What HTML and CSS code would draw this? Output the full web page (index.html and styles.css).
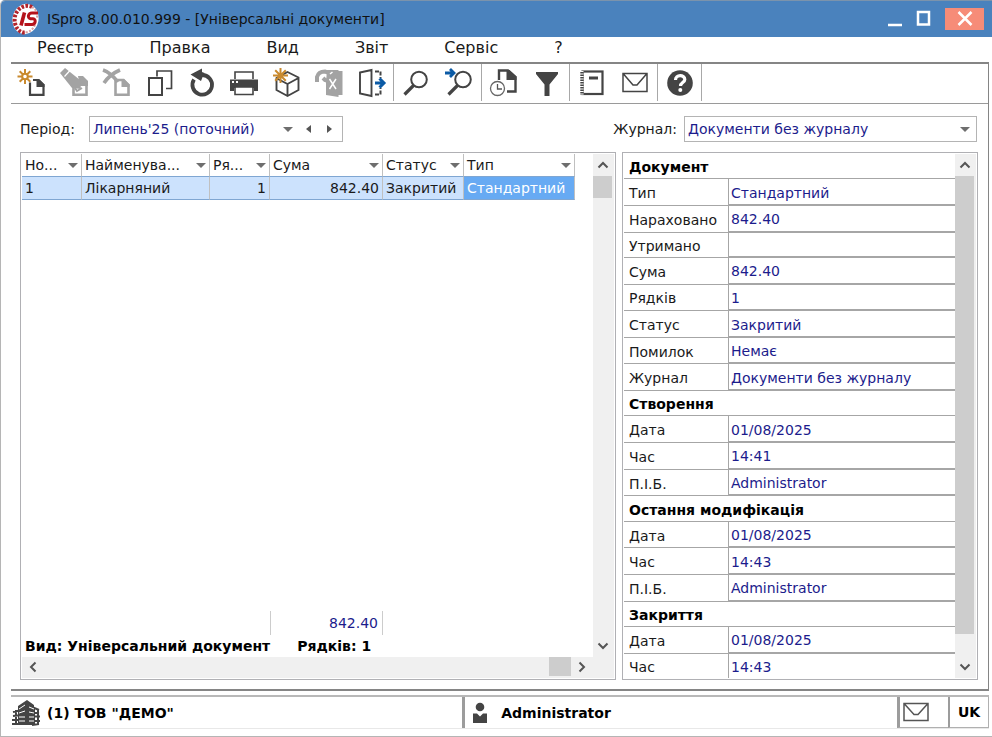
FILE: index.html
```html
<!DOCTYPE html>
<html lang="uk">
<head>
    <meta charset="UTF-8">
    <meta name="viewport" content="width=device-width, initial-scale=1.0">
    <title>ISpro 8.00.010.999 - [Універсальні документи]</title>
    <link rel="stylesheet" href="styles.css">
</head>
<body>

<div class="window">
    <header class="titlebar">
        <svg class="logo" viewBox="0 0 28 32" aria-hidden="true">
            <ellipse cx="13.5" cy="16" rx="11" ry="13.2" fill="#fff" stroke="#fff" stroke-width="4" transform="rotate(12 13.5 16)"/>
            <path d="M20 4C12 0 3 7 2.600 16c-.2 8 5 14.500 11 13.500" fill="none" stroke="#b3242b" stroke-width="4" stroke-dasharray="2.600 1.500"/>
            <path d="M20 4c4 2 5.500 6 5 11M13.600 29.500c5-1 8-4 9.500-8" fill="none" stroke="#dba0a3" stroke-width="2" stroke-dasharray="2 1.500"/>
            <path d="M9 22.500l3.500-13" stroke="#b5121b" stroke-width="3.600" fill="none"/>
            <path d="M26 10h-6c-4 0-5 5.200-1.500 5.700h2.500c3.500.3 2.600 5.700-1 5.700h-7.500" stroke="#b5121b" stroke-width="3" fill="none"/>
        </svg>
        <h1>ISpro 8.00.010.999 - [Універсальні документи]</h1>
        <div class="window-buttons">
            <button type="button" aria-label="Згорнути"><svg width="16" height="18"><path d="M1 15h14" stroke="#fff" stroke-width="2.500"/></svg></button>
            <button type="button" aria-label="Розгорнути"><svg width="16" height="18"><rect x="2" y="2" width="11" height="12.500" fill="none" stroke="#fff" stroke-width="2.500"/></svg></button>
            <button type="button" class="close" aria-label="Закрити"><svg width="16" height="18"><path d="M1.500 2l13 13M14.500 2l-13 13" stroke="#fff" stroke-width="2.500"/></svg></button>
        </div>
    </header>

    <nav class="menu">
        <a href="#">Реєстр</a>
        <a href="#">Правка</a>
        <a href="#">Вид</a>
        <a href="#">Звіт</a>
        <a href="#">Сервіс</a>
        <a href="#">?</a>
    </nav>

    <main class="frame">
        <div class="toolbar">
            <div class="group group-main">
                <button type="button" aria-label="Створити">
                    <svg viewBox="0 0 30 30"><path d="M13 14.500v12.300h13.500V17l-5-5H16" fill="none" stroke="#444" stroke-width="2.200"/><path d="M19.500 11h2.500l5.500 5.500v2.500h-8z" fill="#444"/><path d="M8 1v15M.5 8.500h15M2.700 3.200l10.600 10.600M13.300 3.200L2.700 13.800" stroke="#c98a2e" stroke-width="2"/><circle cx="8" cy="8.500" r="2.800" fill="#fff" stroke="#c98a2e" stroke-width="2"/></svg>
                </button>
                <button type="button" aria-label="Змінити">
                    <svg viewBox="0 0 30 30"><path d="M13.500 18v8.800h13V14l-4.500-3.500h-2" fill="none" stroke="#a3a3a3" stroke-width="2.600"/><path d="M18 8h5l5 5v5h-8z" fill="#a3a3a3"/><path d="M0 5l5-5 15 12 1 9-9-1z" fill="#a3a3a3"/><path d="M4.500 8.500l5.500-6" stroke="#fff" stroke-width="1.200"/><path d="M15 20l2 3 5-3" fill="none" stroke="#a3a3a3" stroke-width="2"/></svg>
                </button>
                <button type="button" aria-label="Видалити">
                    <svg viewBox="0 0 30 30"><path d="M13.500 12v14.800h13V17l-5-5h-8" fill="none" stroke="#a3a3a3" stroke-width="2.600"/><path d="M19.500 11h2.500l5.500 5.500v2.500h-8z" fill="#a3a3a3"/><path d="M1 2c6 2 11 7 15 12M18 2C11 5 6 9 2 15" fill="none" stroke="#a3a3a3" stroke-width="3.600"/></svg>
                </button>
                <button type="button" aria-label="Копіювати">
                    <svg viewBox="0 0 30 30"><path d="M12 8.500V3h14.500v17.500H21" fill="none" stroke="#444" stroke-width="1.700"/><rect x="4" y="10" width="13" height="17" fill="none" stroke="#444" stroke-width="2"/></svg>
                </button>
                <button type="button" aria-label="Оновити">
                    <svg viewBox="0 0 30 30"><path d="M7 11.500a9.800 9.800 0 1 0 8-4.500" fill="none" stroke="#444" stroke-width="3.800"/><path d="M3.500 6.500l11.500-6V4l2.500 1L16 8l-2 5z" fill="#444"/></svg>
                </button>
                <button type="button" aria-label="Друк">
                    <svg viewBox="0 0 30 30"><path d="M6 11V4h18v7" fill="none" stroke="#444" stroke-width="1.600"/><path d="M1 11.500h28v11.500h-4V20H5v3H1z" fill="#444"/><path d="M6 19v7.500h18V19z" fill="#fff" stroke="#444" stroke-width="1.600"/><path d="M3 14h2M7 14h2" stroke="#fff" stroke-width="2"/></svg>
                </button>
                <button type="button" aria-label="Новий пакет">
                    <svg viewBox="0 0 30 30"><path d="M15.500 4l11 5.500v12.500l-11 6-11-6V10zM5 10.500l10.500 5.500 11-6M15.500 16v12" fill="none" stroke="#444" stroke-width="1.900"/><path d="M8.500 0v15M1 7.500h15M3.200 2.200l10.600 10.600M13.800 2.200L3.200 12.800" stroke="#c98a2e" stroke-width="2"/></svg>
                </button>
                <button type="button" aria-label="Експорт">
                    <svg viewBox="0 0 30 30"><path d="M13 2h11.500v1h4v24h-4v2L12 27V14z" fill="#a3a3a3"/><path d="M3 14V9c1-4 4-5.500 8-5.500l6 2V14l-6-2-2-2" fill="none" stroke="#a3a3a3" stroke-width="4"/><path d="M15.500 11l6.500 10M22 11l-6.500 10M16 6l2.500-2" stroke="#fff" stroke-width="1.500"/></svg>
                </button>
                <button type="button" aria-label="Вихід">
                    <svg viewBox="0 0 30 30"><path d="M3 4.500L14.500 2v26L3 25.500z" fill="none" stroke="#444" stroke-width="1.900"/><path d="M18 3.500h5.500V10M18 26.500h5.500V20" fill="none" stroke="#444" stroke-width="2" stroke-dasharray="4 1.500"/><path d="M18 15h8M22.500 10.500L27 15l-4.500 4.500" fill="none" stroke="#0b5aa5" stroke-width="3"/></svg>
                </button>
            </div>
            <div class="group">
                <button type="button" aria-label="Пошук">
                    <svg viewBox="0 0 30 30"><circle cx="18" cy="11.500" r="7.800" fill="none" stroke="#444" stroke-width="2"/><path d="M13 17L3.500 26.500" stroke="#444" stroke-width="3.200"/></svg>
                </button>
                <button type="button" aria-label="Шукати далі">
                    <svg viewBox="0 0 30 30"><circle cx="19" cy="11.500" r="7.800" fill="none" stroke="#444" stroke-width="2"/><path d="M14 17L4.500 26.500" stroke="#444" stroke-width="3.200"/><path d="M1 5h8M6 1l4 4-4 4" fill="none" stroke="#0b5aa5" stroke-width="2.800"/></svg>
                </button>
            </div>
            <div class="group">
                <button type="button" aria-label="Історія">
                    <svg viewBox="0 0 30 30"><path d="M10 12V2.500h9L26.500 9v14.500H18" fill="none" stroke="#444" stroke-width="2.400"/><path d="M17.500 2h3l7 6.500V12h-10z" fill="#444"/><circle cx="8.500" cy="20.500" r="7" fill="#fff" stroke="#666" stroke-width="1.300"/><path d="M8.500 16v5h4.500" fill="none" stroke="#555" stroke-width="1.300"/></svg>
                </button>
                <button type="button" aria-label="Фільтр">
                    <svg viewBox="0 0 30 30"><path d="M4 4h22v2l-8.500 10.500V28h-5V16.500L4 6z" fill="#444"/></svg>
                </button>
            </div>
            <div class="group">
                <button type="button" aria-label="Журнал">
                    <svg viewBox="0 0 30 30"><rect x="5.500" y="3.500" width="20" height="22.500" fill="none" stroke="#444" stroke-width="2.200"/><path d="M5 3v24" stroke="#fff" stroke-width="3"/><path d="M5 4v23" stroke="#444" stroke-width="3.400" stroke-dasharray="1.500 1"/><path d="M12 10h9" stroke="#444" stroke-width="3"/></svg>
                </button>
                <button type="button" aria-label="Пошта">
                    <svg viewBox="0 0 30 30"><path d="M3 5.500h24v18H3zM3.500 6L13 17h4l9.500-11" fill="none" stroke="#444" stroke-width="1.500"/></svg>
                </button>
            </div>
            <div class="group group-help">
                <button type="button" aria-label="Довідка">
                    <svg viewBox="0 0 30 30"><circle cx="15" cy="15" r="12.800" fill="#444"/><path d="M10.500 12c0-5.800 9.300-5.500 9.300-.6 0 3.200-4.300 3.200-4.300 6.600" fill="none" stroke="#fff" stroke-width="3.200"/><circle cx="15.300" cy="22" r="2" fill="#fff"/></svg>
                </button>
            </div>
        </div>

        <div class="filters">
            <label for="period">Період:</label>
            <div class="combo combo-period">
                <select id="period"><option>Липень'25 (поточний)</option></select>
                <span class="arrow"></span>
                <button type="button" aria-label="Попередній період"><span class="arrow-left"></span></button>
                <button type="button" aria-label="Наступний період"><span class="arrow-right"></span></button>
            </div>
            <label for="journal" class="journal-label">Журнал:</label>
            <div class="combo combo-journal">
                <select id="journal"><option>Документи без журналу</option></select>
                <span class="arrow"></span>
            </div>
        </div>

        <div class="panels">
            <section class="panel registry">
                <div class="registry-body">
                    <table class="grid">
                        <colgroup>
                            <col class="col-number"><col class="col-name"><col class="col-rows"><col class="col-sum"><col class="col-status"><col class="col-type">
                        </colgroup>
                        <thead>
                            <tr>
                                <th><div>Но...<span class="arrow"></span></div></th>
                                <th><div>Найменува...<span class="arrow"></span></div></th>
                                <th><div>Ря...<span class="arrow"></span></div></th>
                                <th><div>Сума<span class="arrow"></span></div></th>
                                <th><div>Статус<span class="arrow"></span></div></th>
                                <th><div>Тип<span class="arrow"></span></div></th>
                            </tr>
                        </thead>
                        <tbody>
                            <tr>
                                <td>1</td>
                                <td>Лікарняний</td>
                                <td class="num">1</td>
                                <td class="num">842.40</td>
                                <td>Закритий</td>
                                <td class="current">Стандартний</td>
                            </tr>
                        </tbody>
                    </table>
                    <div class="registry-footer">
                        <div class="total">842.40</div>
                        <div class="summary"><span>Вид: Універсальний документ</span><span>Рядків: 1</span></div>
                    </div>
                </div>
                <div class="scroll-v">
                    <button type="button" aria-label="Вгору"><svg width="12" height="8"><path d="M1.500 6.500L6 2l4.500 4.500"/></svg></button>
                    <div class="thumb thumb-small"></div>
                    <button type="button" class="scroll-end" aria-label="Вниз"><svg width="12" height="8"><path d="M1.500 1.500L6 6l4.500-4.500"/></svg></button>
                </div>
                <div class="scroll-h">
                    <button type="button" aria-label="Вліво"><svg width="8" height="12"><path d="M6.500 1.500L2 6l4.500 4.500"/></svg></button>
                    <div class="thumb"></div>
                    <button type="button" aria-label="Вправо"><svg width="8" height="12"><path d="M1.500 1.500L6 6l-4.500 4.500"/></svg></button>
                </div>
            </section>

            <section class="panel details">
                <table class="props">
                    <tr><th colspan="2">Документ</th></tr>
                    <tr><td>Тип</td><td>Стандартний</td></tr>
                    <tr><td>Нараховано</td><td>842.40</td></tr>
                    <tr><td>Утримано</td><td></td></tr>
                    <tr><td>Сума</td><td>842.40</td></tr>
                    <tr><td>Рядків</td><td>1</td></tr>
                    <tr><td>Статус</td><td>Закритий</td></tr>
                    <tr><td>Помилок</td><td>Немає</td></tr>
                    <tr><td>Журнал</td><td>Документи без журналу</td></tr>
                    <tr><th colspan="2">Створення</th></tr>
                    <tr><td>Дата</td><td>01/08/2025</td></tr>
                    <tr><td>Час</td><td>14:41</td></tr>
                    <tr><td>П.І.Б.</td><td>Administrator</td></tr>
                    <tr><th colspan="2">Остання модифікація</th></tr>
                    <tr><td>Дата</td><td>01/08/2025</td></tr>
                    <tr><td>Час</td><td>14:43</td></tr>
                    <tr><td>П.І.Б.</td><td>Administrator</td></tr>
                    <tr><th colspan="2">Закриття</th></tr>
                    <tr><td>Дата</td><td>01/08/2025</td></tr>
                    <tr><td>Час</td><td>14:43</td></tr>
                </table>
                <div class="scroll-v">
                    <button type="button" aria-label="Вгору"><svg width="12" height="8"><path d="M1.500 6.500L6 2l4.500 4.500"/></svg></button>
                    <div class="thumb thumb-large"></div>
                    <button type="button" class="scroll-end" aria-label="Вниз"><svg width="12" height="8"><path d="M1.500 1.500L6 6l4.500-4.500"/></svg></button>
                </div>
            </section>
        </div>
    </main>

    <footer class="statusbar">
        <div class="status-company">
            <svg width="28" height="28" viewBox="0 0 28 28" aria-hidden="true"><path d="M6 7l9-6v25H6M15 1l7 5v20h-7z" fill="#444"/><path d="M1 13l9-2M1 17l9-1M0 21h10M0 25h10M4 11v15M9 10v16M20 8l7 3M20 13l7 1.500M20 17.500h8M20 22h8M20 26l7-1M26 10v15M22 8v18" stroke="#444" stroke-width="2" fill="none"/><path d="M7 10l6-4M7 14l6-2M7 18h6M7 22h6M17 8l5 2M17 13l5 1M17 18h5M17 22h5" stroke="#fff" stroke-width="1"/></svg>
            <span>(1) ТОВ "ДЕМО"</span>
        </div>
        <div class="status-user">
            <svg width="16" height="22" viewBox="0 0 16 22" aria-hidden="true"><circle cx="8" cy="5" r="4.300" fill="#444"/><path d="M1 11.500h4l3 3 3-3h4V21H1z" fill="#444"/></svg>
            <span>Administrator</span>
        </div>
        <div class="status-mail">
            <svg width="26" height="20" viewBox="0 0 26 20" aria-label="Пошта"><path d="M1 1.500h24v17H1zM1.500 2L11 12.500h4L24.500 2" fill="none" stroke="#555" stroke-width="1.500"/></svg>
        </div>
        <div class="status-lang">UK</div>
    </footer>
</div>

</body>
</html>
```
FILE: styles.css
```css
* {
    box-sizing: border-box;
}
body {
    margin: 0;
    font-family: Verdana, "DejaVu Sans", sans-serif;
    font-size: 14px;
    line-height: 18px;
    color: #1a1a1a;
    background-color: #fff;
}
button {
    margin: 0;
    padding: 0;
    border: none;
    background: none;
    display: flex;
    align-items: center;
    justify-content: center;
}
.window {
    min-height: 100vh;
    display: flex;
    flex-direction: column;
    border: 1px solid #b5b5b5;
    border-top-color: #7b93ac;
    border-right: none;
    border-top-left-radius: 5px;
    overflow: hidden;
}

/* title */
.titlebar {
    height: 36px;
    padding: 0 8px 1px 11px;
    display: flex;
    align-items: center;
    background-color: #4a82bd;
}
.logo {
    width: 28px;
    height: 32px;
}
.titlebar h1 {
    margin: 0 0 0 7px;
    font-size: 14px;
    font-weight: normal;
    color: #111;
}
.window-buttons {
    margin-left: auto;
    display: flex;
    gap: 13px;
}
.window-buttons button {
    width: 16px;
    height: 22px;
}
.window-buttons .close {
    width: 39px;
    background-color: #f68c78;
}

/* menu */
.menu {
    height: 25px;
    padding: 0 36px;
    display: flex;
    gap: 56px;
    font-size: 16px;
    line-height: 22px;
}
.menu a {
    color: #1a1a1a;
    text-decoration: none;
}

/* work area */
.frame {
    flex: 1;
    margin: 0 3px 4px 10px;
    display: flex;
    flex-direction: column;
    border: 2px solid #858585;
    border-left: none;
    border-right-width: 1px;
}
.toolbar {
    height: 40px;
    display: flex;
    border-bottom: 1px solid #9a9a9a;
}
.group {
    width: 88px;
    margin-bottom: 2px;
    display: flex;
    border-right: 1px solid #a8a8a8;
}
.group-main {
    width: 383px;
}
.group-help {
    width: 44px;
}
.group button {
    flex: 1;
}
.group svg {
    width: 30px;
    height: 30px;
}
.filters {
    padding: 12px 11px 10px 9px;
    display: flex;
    align-items: center;
}
.combo {
    height: 26px;
    padding-right: 6px;
    display: flex;
    align-items: center;
    border: 1px solid #b4b4b4;
}
.combo select {
    flex: 1;
    min-width: 0;
    height: 24px;
    padding: 0 0 0 3px;
    border: none;
    appearance: none;
    background: none;
    font: inherit;
    color: #1c1c8c;
}
.combo-period {
    width: 254px;
    padding-right: 2px;
    margin-left: 14px;
}
.combo-period button {
    width: 21px;
    height: 22px;
}
.combo-journal {
    width: 293px;
    margin-left: 7px;
}
.journal-label {
    margin-left: auto;
}
.arrow {
    flex: none;
    border: 5px solid transparent;
    border-top-color: #6e6e6e;
    border-bottom: none;
}
.combo-period .arrow {
    margin-right: 5px;
}
.arrow-left,
.arrow-right {
    border: 4px solid transparent;
}
.arrow-left {
    border-right: 5px solid #555;
    border-left: none;
}
.arrow-right {
    border-left: 5px solid #555;
    border-right: none;
}
.panels {
    flex: 1;
    margin: 0 10px 9px 9px;
    display: grid;
    grid-template-columns: 596fr 356fr;
    gap: 6px;
}
.panel {
    padding: 1px;
    border: 1px solid #b0b0b4;
    display: grid;
    grid-template-columns: 1fr 21px;
}
.registry {
    grid-template-rows: 1fr 21px;
}
.registry-body {
    display: flex;
    flex-direction: column;
    justify-content: space-between;
}

/* document list */
.grid {
    width: 553px;
    table-layout: fixed;
    border-collapse: separate;
    border-spacing: 0;
}
.col-number { width: 60px; }
.col-name { width: 128px; }
.col-rows { width: 60px; }
.col-sum { width: 113px; }
.col-status { width: 81px; }
.col-type { width: 111px; }
.grid th,
.grid td {
    height: 22px;
    padding: 0 3px;
    border-right: 1px solid #c0c0c0;
    font-weight: normal;
    text-align: left;
    white-space: nowrap;
}
.grid th div {
    display: flex;
    align-items: center;
    justify-content: space-between;
}
.grid td {
    height: 24px;
    background-color: #cce2fd;
    border-top: 1px solid #7fa6d2;
    border-bottom: 1px solid #7fa6d2;
}
.grid .num {
    text-align: right;
}
.grid .current {
    background-color: #67aaf3;
    color: #fff;
}
.total {
    width: 113px;
    height: 24px;
    margin-left: 248px;
    padding-right: 4px;
    border-left: 1px solid #ccc;
    border-right: 1px solid #ccc;
    line-height: 24px;
    text-align: right;
    color: #1c1c8c;
}
.summary {
    padding-left: 3px;
    display: flex;
    gap: 27px;
    font-weight: bold;
    line-height: 22px;
    color: #000;
}

/* scrollbars */
.scroll-v,
.scroll-h {
    display: flex;
    background-color: #f0f0f0;
}
.scroll-v {
    flex-direction: column;
    padding-right: 2px;
}
.scroll-h {
    grid-column: 1 / 3;
    padding-right: 21px;
    padding-bottom: 2px;
}
.scroll-v button,
.scroll-v .thumb {
    height: 22px;
}
.scroll-h button {
    width: 22px;
}
.scroll-h .thumb {
    width: 22px;
    margin-left: auto;
}
.scroll-v .thumb-large {
    flex: 1;
}
.scroll-v .scroll-end {
    margin-top: auto;
}
.details .scroll-end {
    margin-top: 22px;
}
.thumb {
    background-color: #cdcdcd;
}
.scroll-v path,
.scroll-h path {
    fill: none;
    stroke: #555;
    stroke-width: 2;
}

/* document details */
.props {
    width: 100%;
    height: 100%;
    border-collapse: separate;
    border-spacing: 0;
}
.props th,
.props td {
    padding: 2px 5px 0;
    border-bottom: 1px solid #a6a6a6;
    line-height: 18px;
    text-align: left;
}
.props th {
    color: #000;
}
.props td:first-child {
    width: 104px;
}
.props td:last-child {
    padding-left: 2px;
    border-left: 1px solid #a6a6a6;
    border-bottom-width: 2px;
    color: #1c1c8c;
}
.props tr:last-child td {
    border-bottom: none;
}

/* status bar */
.statusbar {
    height: 34px;
    margin: 0 3px 7px 10px;
    display: flex;
    border-top: 2px solid #b8b8b8;
    border-bottom: 1px solid #e8e8e8;
    font-weight: bold;
    color: #000;
}
.statusbar div {
    display: flex;
    align-items: center;
}
.statusbar .status-company {
    flex: 461;
    padding-left: 1px;
    gap: 7px;
}
.statusbar .status-user {
    flex: 435;
    padding-left: 7px;
    gap: 13px;
    border-left: 3px solid #9c9c9c;
}
.statusbar .status-mail {
    width: 51px;
    padding-left: 3px;
    border-left: 3px solid #9c9c9c;
    border-bottom: 1px solid #b0b0b0;
}
.statusbar .status-lang {
    width: 41px;
    justify-content: center;
    border: 1px solid #b0b0b0;
    border-top: none;
    border-left: 2px solid #9c9c9c;
}
```
